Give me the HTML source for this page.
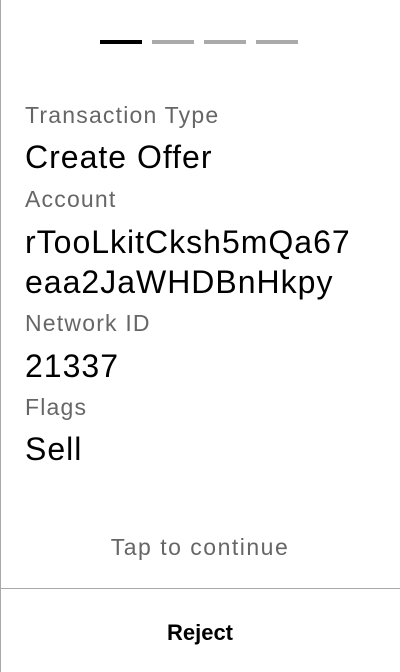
<!DOCTYPE html>
<html><head><meta charset="utf-8"><style>
html,body{margin:0;padding:0;background:#fff;}
body{width:400px;height:672px;position:relative;overflow:hidden;font-family:"Liberation Sans",Arial,sans-serif;}
.lb{position:absolute;left:0;top:0;width:1px;height:672px;background:#a8a8a8;}
.bar{position:absolute;top:40px;height:4px;width:42px;background:#aaa;}
.t{position:absolute;left:25px;line-height:1;white-space:nowrap;}
.l{font-size:23px;color:#666;letter-spacing:1.2px;}
.v{font-size:32px;color:#000;letter-spacing:1px;}
.div{position:absolute;left:0;top:588px;width:400px;height:1px;background:#a8a8a8;}
</style></head><body>
<div class="lb"></div>
<div class="bar" style="left:100px;background:#000"></div>
<div class="bar" style="left:152px"></div>
<div class="bar" style="left:204px"></div>
<div class="bar" style="left:256px"></div>
<div class="t l" style="top:104px">Transaction Type</div>
<div class="t v" style="top:141px">Create Offer</div>
<div class="t l" style="top:188px">Account</div>
<div class="t v" style="top:226px">rTooLkitCksh5mQa67</div>
<div class="t v" style="top:266px">eaa2JaWHDBnHkpy</div>
<div class="t l" style="top:312px">Network ID</div>
<div class="t v" style="top:350px">21337</div>
<div class="t l" style="top:396px">Flags</div>
<div class="t v" style="top:433px">Sell</div>
<div class="t l" style="left:0;width:400px;text-align:center;top:536px;letter-spacing:1.5px">Tap to continue</div>
<div class="div"></div>
<div class="t" style="left:0;width:400px;text-align:center;top:622px;font-size:22px;font-weight:bold;color:#000">Reject</div>
</body></html>
